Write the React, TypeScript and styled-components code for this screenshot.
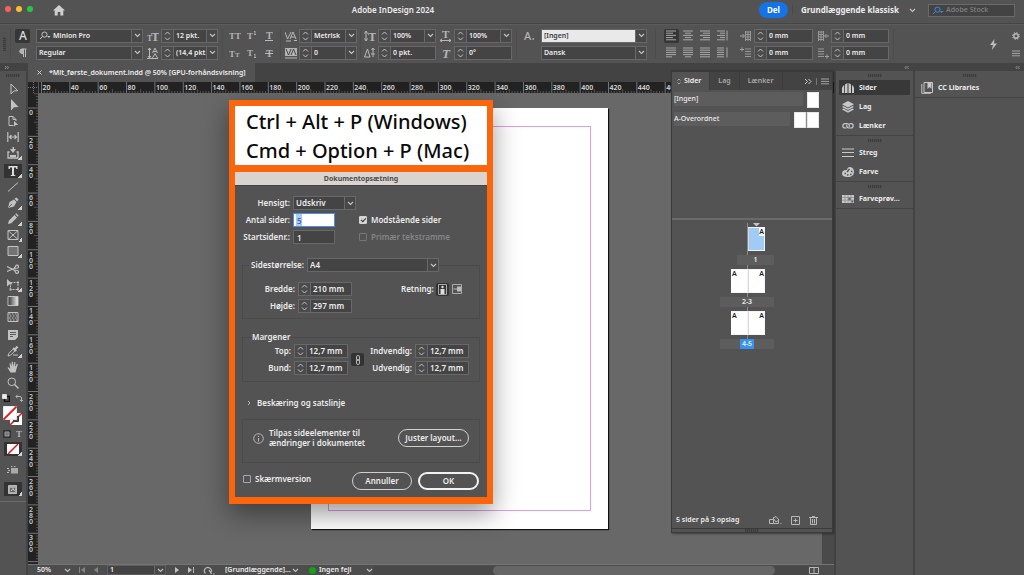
import React from "react";
import styled, { createGlobalStyle, css } from "styled-components";

const GlobalStyle = createGlobalStyle`
  *, *::before, *::after { box-sizing: border-box; }
  body {
    margin: 0;
    background: #434343;
    color: #ececec;
    font: 600 7px/10px "Noto Sans", "Open Sans", sans-serif;
  }
  button, input, select { font: inherit; color: inherit; margin: 0; border-radius: 0; }
  button { padding: 0; border: 0; background: none; display: flex; align-items: center; justify-content: center; }
  fieldset { margin: 0; min-width: 0; }
  svg { display: block; flex: none; }
`;

/* ---------- Shared icon drawing ---------- */

const Icon = ({ w = 12, h = 12, children }: { w?: number; h?: number; children: React.ReactNode }) => (
  <svg width={w} height={h} viewBox={`0 0 ${w} ${h}`} fill="none" stroke="#b8b8b8" strokeWidth="1" aria-hidden="true">
    {children}
  </svg>
);

const Chevron = () => (
  <svg width="7" height="5" viewBox="0 0 7 5" fill="none" stroke="#c4c4c4" strokeWidth="1.1" aria-hidden="true">
    <path d="M1 1l2.5 2.5L6 1" />
  </svg>
);

const MenuIcon = () => (
  <Icon w={8} h={7}>
    <path d="M0 1h8M0 3.4h8M0 5.8h8" stroke="#a4a4a4" />
  </Icon>
);

const glyph = { fill: "#b4b4b4", stroke: "none", fontFamily: "Liberation Serif, serif", fontWeight: 700 };
const sansGlyph = { stroke: "none", fontFamily: "Noto Sans, sans-serif", fontWeight: 500 };

/* ---------- Form controls ---------- */

const Field = styled.div<{ $light?: boolean; $grow?: boolean }>`
  display: flex;
  height: 14px;
  min-width: 0;
  flex: ${(p) => (p.$grow ? "1" : "none")};
  border: 1px solid #686868;
  background: ${(p) => (p.$light ? "#e9e9e9" : "#444444")};
  color: ${(p) => (p.$light ? "#3a3a3a" : "inherit")};
`;

const control = css`
  width: 100%;
  min-width: 0;
  height: 12px;
  padding: 0 0 0 2px;
  border: 0;
  outline: 0;
  background: transparent;
  line-height: 12px;
`;

const TextInput = styled.input`
  ${control}
`;

const NativeSelect = styled.select`
  ${control}
  appearance: none;
`;

const ArrowBox = styled.span`
  display: flex;
  align-items: center;
  justify-content: center;
  flex: none;
  width: 11px;
  border-left: 1px solid #686868;
  background: #484848;
  pointer-events: none;
`;

const StepperBox = styled.span`
  display: flex;
  flex-direction: column;
  flex: none;
  width: 12px;
  border-right: 1px solid #686868;
  background: #4b4b4b;
`;

const StepButton = styled.button`
  flex: 1;
`;

const Stepper = ({ label }: { label: string }) => (
  <StepperBox>
    <StepButton type="button" aria-label={`${label} op`}>
      <Icon w={7} h={4}><path d="M1 3.5L3.5 1 6 3.5" stroke="#c4c4c4" /></Icon>
    </StepButton>
    <StepButton type="button" aria-label={`${label} ned`}>
      <Icon w={7} h={4}><path d="M1 .5L3.5 3 6 .5" stroke="#c4c4c4" /></Icon>
    </StepButton>
  </StepperBox>
);

type PickerProps = { label: string; value: string; id?: string; step?: boolean; light?: boolean; lead?: React.ReactNode };

const LeadIcon = styled.span`
  display: flex;
  align-items: center;
  padding-left: 2px;
`;

const Picker = ({ label, value, id, step, light, lead }: PickerProps) => (
  <Field $grow $light={light}>
    {step && <Stepper label={label} />}
    {lead && <LeadIcon>{lead}</LeadIcon>}
    <NativeSelect id={id} aria-label={id ? undefined : label} defaultValue={value}>
      <option>{value}</option>
    </NativeSelect>
    <ArrowBox><Chevron /></ArrowBox>
  </Field>
);

const NumberField = ({ label, value, id }: { label: string; value: string; id?: string }) => (
  <Field $grow>
    <Stepper label={label} />
    <TextInput id={id} aria-label={id ? undefined : label} defaultValue={value} />
  </Field>
);

/* ---------- Title bar ---------- */

const Page = styled.div`
  display: flex;
  flex-direction: column;
  min-height: 100vh;
`;

const TitleBar = styled.header`
  display: flex;
  align-items: center;
  height: 24px;
  padding: 0 9px 3px 5px;
  background: #535353;
  border-bottom: 1px solid #454545;
  font-size: 8px;
`;

const Lights = styled.div`
  display: flex;
  gap: 5px;
  margin-right: 20px;
  padding-bottom: 3px;
`;

const Light = styled.span<{ $color: string }>`
  width: 6px;
  height: 6px;
  border-radius: 50%;
  background: ${(p) => p.$color};
`;

const AppTitle = styled.h1`
  flex: 1;
  margin: 0;
  padding-right: 38px;
  text-align: center;
  font-size: 8px;
  font-weight: 600;
`;

const ShareButton = styled.button`
  width: 29px;
  height: 16px;
  border-radius: 8px;
  background: #1473e6;
  color: #fff;
  font-weight: 700;
`;

const WorkspaceButton = styled.button`
  gap: 10px;
  margin: 0 7px 0 4px;
  padding: 0 5px 0 8px;
  border-left: 1px solid #4a4a4a;
  font-weight: 700;
`;

const SearchBox = styled.label`
  display: flex;
  align-items: center;
  width: 87px;
  height: 13px;
  padding-left: 3px;
  border: 1px solid #6a6a6a;
  background: #434343;
  font-size: 7px;
  input::placeholder { color: #7c7c7c; opacity: 1; }
`;

const Lens = ({ color }: { color: string }) => (
  <Icon w={12} h={9}>
    <circle cx="5.5" cy="3.6" r="2.6" stroke={color} />
    <path d="M3.6 5.4L1 8" stroke={color} />
    <path d="M8 5h3.6L9.8 7z" fill={color} stroke="none" />
  </Icon>
);

/* ---------- Control bar ---------- */

const ControlBar = styled.section`
  display: flex;
  align-items: center;
  gap: 4px;
  height: 39px;
  padding: 0 4px 0 3px;
  background: #535353;
  border-top: 1px solid #5c5c5c;
`;

const Grip = styled.span<{ $vertical?: boolean }>`
  width: ${(p) => (p.$vertical ? 3 : 14)}px;
  height: ${(p) => (p.$vertical ? 14 : 3)}px;
  background: repeating-linear-gradient(${(p) => (p.$vertical ? "0deg" : "90deg")}, #3b3b3b 0 1px, #4d4d4d 1px 2px);
`;

const Group = styled.div<{ $w: number }>`
  display: grid;
  grid-template-rows: 14px 14px;
  row-gap: 3px;
  flex: none;
  width: ${(p) => p.$w}px;
`;

const Line = styled.div`
  display: flex;
  align-items: center;
  gap: 2px;
`;

const Separator = styled.span<{ $gap?: number }>`
  width: 1px;
  height: 30px;
  margin: 0 ${(p) => p.$gap ?? 0}px;
  background: #4c4c4c;
`;

const Toggle = styled.button<{ $on?: boolean }>`
  width: 15px;
  height: 14px;
  border-radius: 2px;
  background: ${(p) => (p.$on ? "#363636" : "transparent")};
`;

const EdgeTools = styled.div`
  display: flex;
  align-items: center;
  gap: 15px;
  margin-left: auto;
`;

const Stack = styled.div`
  display: flex;
  flex-direction: column;
  gap: 10px;
`;

const TextIcon = ({ children }: { children: React.ReactNode }) => <Icon>{children}</Icon>;

const AlignIcon = ({ rows, side }: { rows: [number, number][]; side?: boolean }) => (
  <Icon w={11} h={11}>
    {rows.map(([a, b], i) => <path key={i} d={`M${a} ${1 + i * 2.2}H${b}`} stroke="#a9a9a9" />)}
    {side && <path d="M10 .5v10" stroke="#a9a9a9" />}
  </Icon>
);

const alignTop: { name: string; rows: [number, number][]; side?: boolean }[] = [
  { name: "Venstrestil", rows: [[0, 10], [0, 7], [0, 10], [0, 7], [0, 10]] },
  { name: "Centrer", rows: [[0, 10], [2, 8], [0, 10], [2, 8], [0, 10]] },
  { name: "Højrestil", rows: [[0, 10], [3, 10], [0, 10], [3, 10], [0, 10]] },
  { name: "Mod ryg", rows: [[0, 8], [3, 8], [0, 8], [3, 8], [0, 8]], side: true },
];
const alignBottom: typeof alignTop = [
  { name: "Juster venstre", rows: [[0, 10], [0, 10], [0, 10], [0, 10], [0, 6]] },
  { name: "Juster centreret", rows: [[0, 10], [0, 10], [0, 10], [0, 10], [2, 8]] },
  { name: "Juster alt", rows: [[0, 10], [0, 10], [0, 10], [0, 10], [0, 10]] },
  { name: "Fra ryg", rows: [[0, 7], [0, 7], [0, 7], [0, 7], [0, 7]], side: true },
];

const IndentIcon = ({ flip, low }: { flip?: boolean; low?: boolean }) => (
  <Icon w={12} h={12}>
    <g transform={flip ? "translate(12 0) scale(-1 1)" : undefined}>
      <path d={low ? "M5 2h6M5 4.5h6M5 7h6M5 9.5h6" : "M5.5 1v10M8 1v10M10.5 1v10M6 2h5M6 4.5h4M6 7h5M6 9.5h4"} stroke="#989898" />
      <path d={low && flip ? "M0 9.5h4M2 7.5v4" : low ? "M0 2.5h4M2 .5v4" : "M0 6h4M2.5 4L4.5 6l-2 2"} stroke="#a0a0a0" />
    </g>
  </Icon>
);

const IconCell = styled.span`
  display: flex;
  flex: none;
  width: 12px;
`;

/* ---------- Work area ---------- */

const Main = styled.main`
  position: relative;
  display: flex;
  flex: 1;
`;

const ToolColumn = styled.nav`
  display: flex;
  flex-direction: column;
  width: 27px;
  background: #535353;
  border-right: 1px solid #434343;
`;

const CollapseStrip = styled.div<{ $end?: boolean }>`
  display: flex;
  align-items: center;
  justify-content: ${(p) => (p.$end ? "flex-end" : "flex-start")};
  height: 8px;
  padding: 0 4px;
  background: #434343;
`;

const Collapse = ({ back }: { back?: boolean }) => (
  <Icon w={5} h={5}>
    <path d={back ? "M2.3 1L1 2.5l1.3 1.5M4.5 1L3.2 2.5l1.3 1.5" : "M1 1l1.3 1.5L1 4M3.2 1l1.3 1.5L3.2 4"} stroke="#a5a5a5" strokeWidth=".8" />
  </Icon>
);

const GripRow = styled.div`
  display: flex;
  justify-content: center;
  padding: 3px 0;
`;

const ToolSet = styled.div`
  display: flex;
  flex-direction: column;
  align-items: center;
  gap: 4px;
  padding: 2px 1px 3px 0;
`;

const ToolGroup = styled.div<{ $gap?: number }>`
  display: flex;
  flex-direction: column;
  gap: ${(p) => p.$gap ?? 2}px;
`;

const Tool = styled.button<{ $on?: boolean; $more?: boolean }>`
  position: relative;
  width: 18px;
  height: 14px;
  background: ${(p) => (p.$on ? "#333333" : "transparent")};
  &::after {
    content: "";
    display: ${(p) => (p.$more ? "block" : "none")};
    position: absolute;
    right: 0;
    bottom: 0;
    width: 4px;
    height: 4px;
    background: linear-gradient(135deg, transparent 50%, #cfcfcf 50%);
  }
`;

const Swatches = styled.div`
  display: flex;
  flex-direction: column;
  align-items: center;
  gap: 4px;
  padding: 1px 1px 5px 0;
  border-bottom: 1px solid #6b6b6b;
`;

const SwatchLine = styled.div`
  display: flex;
  gap: 5px;
`;

const DocumentArea = styled.div`
  display: flex;
  flex-direction: column;
  flex: 1;
  min-width: 0;
  margin-left: 1px;
`;

const TabStrip = styled.div`
  display: flex;
  height: 19px;
`;

const DocTab = styled.div`
  display: flex;
  align-items: center;
  gap: 7px;
  padding: 0 9px;
  background: #535353;
`;

const RulerRow = styled.div`
  display: flex;
  height: 11px;
  overflow: hidden;
  background: #222222;
`;

const CanvasRow = styled.div`
  display: flex;
  flex: 1;
  min-height: 470px;
`;

const SideRuler = styled.div`
  flex: none;
  width: 10px;
  overflow: hidden;
  background: #222222;
  contain: size;
`;

const Canvas = styled.div`
  position: relative;
  flex: 1;
  overflow: hidden;
  background: #686868;
`;

const Sheet = styled.div`
  position: absolute;
  left: 273px;
  top: 15px;
  width: 297px;
  height: 421px;
  padding: 18px 17px;
  background: #fff;
  box-shadow: 1px 1px 1px #111;
`;

const Margins = styled.div`
  height: 100%;
  border: 1px solid #e39bea;
`;

const ScrollTrack = styled.div`
  width: 12px;
  background: #4a4a4a;
`;

const StatusBar = styled.footer`
  display: flex;
  align-items: center;
  height: 11px;
  padding: 0 2px 0 7px;
  background: #4d4d4d;
  border-top: 1px solid #747474;
`;

const StatusSelect = styled.label<{ $w: number }>`
  display: flex;
  align-items: center;
  width: ${(p) => p.$w}px;
  select { height: 10px; line-height: 10px; }
`;

const Pager = styled.div`
  display: flex;
  align-items: center;
  gap: 9px;
  margin: 0 9px 0 8px;
`;

const PageField = styled.label`
  display: flex;
  width: 59px;
  height: 10px;
  background: #434343;
  border: 1px solid #5e5e5e;
  select { height: 8px; line-height: 8px; }
`;

const StatusDot = styled.span`
  width: 7px;
  height: 7px;
  margin: 0 1px 0 10px;
  border-radius: 50%;
  background: #16a016;
`;

const HScroll = styled.div`
  display: flex;
  flex: 1;
  height: 9px;
  padding-left: 120px;
  background: #484848;
`;

const HThumb = styled.span`
  flex: 0 1 282px;
  border-radius: 5px;
  background: #666666;
`;

const MM20 = 28.35;
const tick = (i: number) => (i % 10 === 0 ? 11 : i % 5 === 0 ? 4 : 2);

const TopRuler = () => (
  <svg width="794" height="11" aria-hidden="true">
    <path d="M0 5.5h10M5.5 0v11" stroke="#777" strokeDasharray="1 1" />
    <path d="M10.5 0v11" stroke="#555" />
    {Array.from({ length: 280 }, (_, i) => (
      <path key={i} d={`M${(13.5 + (i * MM20) / 10).toFixed(2)} 11v-${tick(i)}`} stroke="#757575" strokeWidth={i % 10 ? 0.6 : 1} />
    ))}
    {Array.from({ length: 27 }, (_, i) => (
      <text key={i} x={14.5 + i * MM20} y="8" fill="#d8d8d8" fontSize="7" fontWeight="600">{20 + i * 20}</text>
    ))}
  </svg>
);

/* Labels read downwards, one digit under the other. */
const LeftRuler = () => (
  <svg width="10" height="471" aria-hidden="true">
    {Array.from({ length: 166 }, (_, i) => {
      const k = i - 5;
      return <path key={i} d={`M10 ${(15 + (k * MM20) / 10).toFixed(2)}h-${k % 10 === 0 ? 10 : k % 5 === 0 ? 4 : 2}`} stroke="#757575" strokeWidth={k % 10 ? 0.6 : 1} />;
    })}
    {Array.from({ length: 16 }, (_, i) => {
      const label = String(i * 20);
      return (
        <text
          key={i}
          x={label.split("").map(() => 1).join(" ")}
          y={label.split("").map((_, n) => 22 + i * MM20 + n * 6).join(" ")}
          fill="#c8c8c8"
          fontSize="7"
        >
          {label}
        </text>
      );
    })}
  </svg>
);

/* ---------- Document setup dialog ---------- */

const Callout = styled.section`
  position: absolute;
  left: 229px;
  top: 37px;
  width: 264px;
  border: 6px solid #fb650b;
  border-bottom-width: 7px;
  background: #fb650b;
  box-shadow: 0 10px 24px rgba(0, 0, 0, 0.4);
  font-size: 8px;
`;

const Shortcut = styled.p`
  height: 59px;
  margin: 0 0 7px;
  padding: 1px 0 0 11px;
  background: #fff;
  color: #0a0a0a;
  font: 500 20px/29px "Noto Sans", sans-serif;
  white-space: nowrap;
`;

const DialogTitle = styled.h2`
  height: 14px;
  margin: 0;
  background: #dad4d0;
  color: #4c4c4c;
  font-size: 7px;
  line-height: 13px;
  text-align: center;
  border-bottom: 1px solid #444;
`;

const DialogBody = styled.form`
  display: flex;
  flex-direction: column;
  padding: 10px 7px 7px;
  background: #535353;
`;

const Split = styled.div`
  display: grid;
  grid-template-columns: 117px 1fr;
`;

const Rows = styled.div<{ $top?: number }>`
  display: flex;
  flex-direction: column;
  gap: 3px;
  padding-top: ${(p) => p.$top ?? 0}px;
`;

const FormRow = styled.div`
  display: flex;
  align-items: center;
  height: 14px;
`;

const FormLabel = styled.label<{ $w: number }>`
  flex: none;
  width: ${(p) => p.$w}px;
  padding-right: 3px;
  text-align: right;
  white-space: nowrap;
`;

const Sized = styled.div<{ $w: number }>`
  display: flex;
  flex: none;
  width: ${(p) => p.$w}px;
`;

const PlainField = styled.input<{ $active?: boolean }>`
  width: 42px;
  height: 14px;
  padding: 0 3px;
  outline: 0;
  border: 1px solid ${(p) => (p.$active ? "#4a90e2" : "#686868")};
  background: ${(p) => (p.$active ? "linear-gradient(90deg, #fff 2px, #a9cdf5 2px 8px, #fff 8px)" : "#444444")};
  color: ${(p) => (p.$active ? "#3f6ea5" : "inherit")};
`;

const CheckLabel = styled.label<{ $off?: boolean }>`
  display: flex;
  align-items: center;
  gap: 4px;
  height: 14px;
  white-space: nowrap;
  color: ${(p) => (p.$off ? "#858585" : "inherit")};
`;

const CheckBox = styled.input`
  appearance: none;
  width: 8px;
  height: 8px;
  border: 1px solid #a8a8a8;
  border-radius: 1px;
  &:disabled { border-color: #757575; }
  &:checked {
    background: #d4d4d4;
    border-color: #d4d4d4;
  }
  &:checked::after {
    content: "";
    display: block;
    width: 5px;
    height: 3px;
    margin: 1px 0 0 1px;
    border: solid #333;
    border-width: 0 0 1px 1px;
    transform: rotate(-45deg);
  }
`;

const Frame = styled.fieldset<{ $mt: number }>`
  margin-top: ${(p) => p.$mt}px;
  padding: 0;
  border: 1px solid #4b4b4b;
`;

const SizeLegend = styled.legend`
  display: flex;
  align-items: center;
  margin-left: 6px;
  padding: 0;
`;

const TextLegend = styled.legend`
  margin-left: 9px;
  padding: 0;
`;

const SizeGrid = styled.div`
  display: grid;
  grid-template-columns: 158px 1fr;
  padding: 10px 0 5px;
`;

const MarginGrid = styled.div`
  display: grid;
  grid-template-columns: 106px 15px 1fr;
  padding: 2px 0 6px;
`;

const OrientationRow = styled.div`
  display: flex;
  align-items: center;
  gap: 2px;
  height: 14px;
`;

const SmallButton = styled.button<{ $on?: boolean }>`
  width: 13px;
  height: 13px;
  border-radius: 2px;
  background: ${(p) => (p.$on ? "#333333" : "transparent")};
`;

const LinkCell = styled.div`
  display: flex;
  align-items: center;
  padding-left: 2px;
`;

const Disclosure = styled.button`
  justify-content: flex-start;
  gap: 5px;
  height: 12px;
  margin-top: 15px;
  padding-left: 5px;
`;

const AdjustBox = styled.div`
  display: flex;
  align-items: center;
  gap: 5px;
  height: 44px;
  margin-top: 10px;
  padding: 0 10px 6px 10px;
  border: 1px solid #4b4b4b;
`;

const AdjustText = styled.p`
  flex: 1;
  margin: 0;
  white-space: nowrap;
`;

const PillButton = styled.button<{ $w: number; $primary?: boolean }>`
  flex: none;
  width: ${(p) => p.$w}px;
  height: 18px;
  border: ${(p) => (p.$primary ? "2px solid #f2f2f2" : "1px solid #cfcfcf")};
  border-radius: 9px;
`;

const DialogFooter = styled.div`
  display: flex;
  gap: 6px;
  margin: 9px 1px 0;
  label { flex: 1; }
`;

/* ---------- Pages panel ---------- */

const PagesPanel = styled.aside`
  position: absolute;
  right: 191px;
  top: 7px;
  width: 162px;
  display: flex;
  flex-direction: column;
  background: #535353;
  border: solid #3a3a3a;
  border-width: 2px 1px 1px;
  box-shadow: 1px 1px 2px rgba(0, 0, 0, 0.4);
`;

const PanelTabs = styled.div`
  display: flex;
  align-items: stretch;
  height: 18px;
  background: #434343;
`;

const PanelTab = styled.button<{ $on?: boolean }>`
  gap: 3px;
  padding: 0 8px 0 ${(p) => (p.$on ? 5 : 8)}px;
  border-right: 1px solid #3c3c3c;
  background: ${(p) => (p.$on ? "#535353" : "transparent")};
  color: ${(p) => (p.$on ? "#f2f2f2" : "#a8a8a8")};
`;

const PanelTools = styled.div`
  display: flex;
  align-items: center;
  gap: 4px;
  margin-left: auto;
  padding-right: 3px;
`;

const Masters = styled.div`
  display: flex;
  flex-direction: column;
  gap: 4px;
  height: 130px;
  padding: 2px 13px 0 2px;
  border-bottom: 2px solid #6a6a6a;
  font-weight: 500;
`;

const MasterRow = styled.div`
  display: flex;
  gap: 4px;
  height: 16px;
`;

const MasterName = styled.span`
  flex: 1;
  height: 14px;
  line-height: 13px;
  background: #5d5d5d;
`;

const Thumbs = styled.span`
  display: flex;
  gap: 1px;
  background: #8a8a8a;
`;

const Thumb = styled.span`
  width: 12px;
  background: #fff;
  border: 1px solid #e8e8e8;
`;

const Spreads = styled.div`
  display: flex;
  flex-direction: column;
  height: 292px;
  padding: 3px 58px 0 47px;
`;

const Spread = styled.figure`
  position: relative;
  display: flex;
  flex-direction: column;
  align-items: flex-end;
  gap: 3px;
  margin: 0;
  padding-top: 3px;
  background: linear-gradient(#8a8a8a, #8a8a8a) right 26px top / 1px 100% no-repeat;
`;

const SectionMarker = styled.span`
  position: absolute;
  top: 0;
  right: 14px;
`;

const SpreadPages = styled.div`
  display: flex;
  height: 26px;
  padding: 1px 9px 1px 0;
`;

const SpreadPage = styled.span<{ $side: "left" | "right"; $current?: boolean }>`
  display: flex;
  align-items: flex-start;
  justify-content: ${(p) => (p.$side === "left" ? "flex-start" : "flex-end")};
  width: 17px;
  border: 1px solid #f4f4f4;
  border-left-color: ${(p) => (p.$side === "left" ? "#fff" : "#d8d8d8")};
  background: ${(p) => (p.$current ? "#a0cbf5" : "#ffffff")};
  color: #222;
  line-height: 8px;
  span { background: #fff; }
`;

const Caption = styled.figcaption<{ $w: number; $on?: boolean }>`
  width: ${(p) => p.$w}px;
  height: 10px;
  background: #5d5d5d;
  text-align: center;
  span {
    display: inline-block;
    padding: 0 2px;
    background: ${(p) => (p.$on ? "#3294f0" : "transparent")};
  }
`;

const PanelFooter = styled.div`
  display: flex;
  align-items: center;
  gap: 9px;
  height: 16px;
  padding: 0 14px 0 4px;
  > span { flex: 1; }
`;

const ResizeBar = styled.div`
  display: flex;
  justify-content: center;
  border-top: 1px solid #3a3a3a;
`;

/* ---------- Dock ---------- */

const Dock = styled.aside<{ $w: number }>`
  display: flex;
  flex-direction: column;
  flex: none;
  width: ${(p) => p.$w}px;
  border-left: 2px solid #434343;
  background: #535353;
  font-weight: 700;
`;

const DockGroup = styled.div`
  display: flex;
  flex-direction: column;
  gap: 4px;
  padding: 0 3px 2px;
  border-bottom: 1px solid #434343;
`;

const DockItem = styled.button<{ $on?: boolean }>`
  justify-content: flex-start;
  gap: 5px;
  height: 15px;
  padding-left: 3px;
  background: ${(p) => (p.$on ? "#383838" : "transparent")};
  white-space: nowrap;
`;

const f = "#c8c8c8";
const dockIcons: Record<string, React.ReactNode> = {
  Sider: <path d="M0 11V6l1-2 1.2-1V11zM3 11V2.5L5.5 1V11zM6.5 11V1L9 2.5V11zM10 11V3l1.2 1 .8 2v5z" fill={f} stroke="none" />,
  Lag: <path d="M6 0l6 3.2-6 3.3L0 3.2zM1.6 5L0 5.9l6 3.2 6-3.2L10.4 5 6 7.4zM1.6 7.6L0 8.5 6 11.8l6-3.3-1.6-.9L6 10z" fill={f} stroke="none" />,
  Lænker: <path d="M4.5 8H3a2.2 2.2 0 010-4.4h2.200A2.2 2.2 0 017 7M7.5 3.6H9A2.2 2.2 0 019 8H6.8A2.2 2.2 0 015 4.7" stroke={f} strokeWidth="1.2" />,
  Streg: <path d="M0 2h12M0 5.5h12M0 9.5h12" stroke={f} strokeWidth="1.2" />,
  Farve: (
    <>
      <path d="M0 7.5C0 5 2 3.5 5 4c0-2 1.5-3.5 3.5-3C11 1.5 12 3.5 12 6c0 3-2.5 5-6 5-3.5 0-6-1-6-3.5z" fill={f} stroke="none" />
      <path d="M2.5 7.5h1.5M5 9h1.5M8 8.5h1.5M9 5.5h1.5M5 6l2.5-3" stroke="#535353" strokeWidth="1.4" />
    </>
  ),
  "Farveprøv…": (
    <>
      <path d="M0 2h12v8H0z" fill={f} stroke="none" />
      <path d="M0 4.5h12M0 7.2h12M3 2v8M6 2v8M9 2v8" stroke="#8b8b8b" strokeWidth=".7" />
      <path d="M6.300 4.800h2.400v2.400h-2.400zM9.400 7.500h2v2h-2z" fill="#666" stroke="none" />
    </>
  ),
  "CC Libraries": (
    <>
      <path d="M3 .5h8.500v10H3zM.8 2v9.300h9" stroke={f} />
      <path d="M6.500 1v6L8.500 5l2 2V1z" fill={f} stroke="none" />
    </>
  ),
};

const dockGroups = [["Sider", "Lag", "Lænker"], ["Streg", "Farve"], ["Farveprøv…"]];

/* ---------- Tool glyphs ---------- */

type ToolDef = { name: string; art: React.ReactNode; more?: boolean; on?: boolean };
const g = "#c2c2c2";
const toolGroups: ToolDef[][] = [
  [
    { name: "Markering", art: <path d="M4 1v10l2.800-3 4-.3z" stroke={g} /> },
    { name: "Direkte markering", art: <path d="M4 0v11.500l3-3.200 4.500-.3z" fill={g} stroke="none" /> },
    { name: "Side", art: <><path d="M6.500 10.500H2V1.500h4L9 4.500V6M6 1.500v3h3" stroke={g} /><path d="M7 6v5.500l1.700-1.500 2.600-.2z" fill={g} stroke="none" /></> },
    { name: "Mellemrum", art: <path d="M.8 1v10M11.200 1v10M2.500 6h7M4.500 4l-2 2 2 2M7.500 4l2 2-2 2" stroke={g} strokeWidth="1.200" /> },
    { name: "Indholdsindsamler", more: true, art: <><path d="M2.500 5H1v6h10V5H9.500" stroke={g} strokeWidth="1.300" /><path d="M3 8h6v2H3zM3 2l3 4 3-4H7V0H5.500v2z" fill={g} stroke="none" /></> },
  ],
  [
    { name: "Tekst", more: true, on: true, art: <path d="M1.500 1h9v3H9.300l-.5-1.500H7v7.300l1.300.4v.8H3.700v-.8l1.300-.4V2.500H3.200L2.700 4H1.500z" fill="#dcdcdc" stroke="none" /> },
    { name: "Streg", art: <path d="M1 10.500L11 1.500" stroke={g} /> },
    { name: "Pen", more: true, art: <><path d="M1 11l1.500-6L7 2.500 9.500 5 7 9.500z" fill={g} stroke="none" /><path d="M7.500 1.800l2-1.300 2 2-1.300 2z" fill={g} stroke="none" /><path d="M1.500 10.500L5 7" stroke="#535353" strokeWidth=".8" /></> },
    { name: "Blyant", more: true, art: <path d="M1 11l.8-3.300L7.500 2 10 4.500 4.300 10.200zM8.200 1.300l1-1 2.500 2.500-1 1z" fill={g} stroke="none" /> },
    { name: "Rektangelramme", more: true, art: <path d="M1 1.500h10v9H1zM1 1.500l10 9M11 1.500l-10 9" stroke={g} /> },
    { name: "Rektangel", more: true, art: <path d="M1 1.500h10v9H1z" stroke={g} fill="#737373" /> },
  ],
  [
    { name: "Saks", art: <path d="M0 3.500l7 3.500M0 8.500L7 5.500M7 5.500l1.500-2a1.500 1.500 0 112 1.500zM7 7l1.500 2a1.500 1.500 0 102-1.500z" stroke={g} strokeWidth="1.200" /> },
    { name: "Fri transformering", more: true, art: <><path d="M3.500 3.500h7.500v7h-7.500z" stroke={g} strokeDasharray="2 1" /><path d="M0 0v7.500L2.200 5.500 5.500 5.300z" fill={g} stroke="none" /><path d="M10 2.500h2v2h-2zM10 9.500h2v2h-2zM2.500 9.500h2v2h-2z" fill={g} stroke="none" /></> },
    { name: "Farveforløb", art: <><defs><linearGradient id="grad"><stop stopColor="#333" /><stop offset="1" stopColor="#eee" /></linearGradient></defs><path d="M1 1.500h10v9H1z" fill="url(#grad)" stroke={g} /></> },
    { name: "Udtoning", art: <><path d="M1 1.500h10v9H1z" stroke={g} /><path d="M2 3h8M3 5h8M2 7h8M3 9h8" stroke="#a0a0a0" strokeWidth="1.500" strokeDasharray="1.500 1.500" /></> },
  ],
  [
    { name: "Note", art: <><path d="M1 1h10v7l-3 3H1z" fill={g} stroke="none" /><path d="M3 3.500h6M3 5.500h6M3 7.500h3" stroke="#5a5a5a" /></> },
    { name: "Pipette", more: true, art: <><path d="M1 11l.7-2.500L6 4.200l1.800 1.800L3.500 10.300z" stroke={g} /><path d="M5.500 3.500l1-1L8 3l1.500-2.300L11.500 2.500 9.300 4.300l.4 1.400-1 1z" fill={g} stroke="none" /><path d="M6 10h5" stroke={g} /></> },
    { name: "Hånd", art: <path d="M3.500 11.500L.5 6.800l1-.6 1.700 1.500L2.500 2.500l1-.3 1 3.500L4.700.8h1.200l.3 4.700L7.400 1l1.100.2-.6 4.800 2-3.300 1 .5L9.300 8.500 8.500 11.500z" fill={g} stroke="none" /> },
    { name: "Zoom", art: <><circle cx="4.800" cy="4.800" r="3.800" stroke={g} /><path d="M7.600 7.600L11.500 11.500" stroke={g} strokeWidth="1.400" /></> },
  ],
];

export default function App() {
  return (
    <Page>
      <GlobalStyle />
      <TitleBar>
        <Lights>
          <Light $color="#fe5f57" /><Light $color="#febc2e" /><Light $color="#28c840" />
        </Lights>
        <button aria-label="Hjem">
          <Icon w={12} h={12}><path d="M6 1L0 6.500h1.700V11.500h3V8h2.600v3.500h3V6.500H12z" fill="#cfcfcf" stroke="none" /></Icon>
        </button>
        <AppTitle>Adobe InDesign 2024</AppTitle>
        <ShareButton>Del</ShareButton>
        <WorkspaceButton>Grundlæggende klassisk <Chevron /></WorkspaceButton>
        <SearchBox>
          <Lens color="#3b8be0" />
          <TextInput aria-label="Adobe Stock" placeholder="Adobe Stock" />
        </SearchBox>
      </TitleBar>

      <ControlBar>
        <Grip $vertical />
        <Separator />
        <Group $w={17}>
          <Toggle $on aria-label="Tegnformatering">
            <TextIcon><text {...sansGlyph} x="2" y="10" fontSize="12" fill="#dcdcdc">A</text></TextIcon>
          </Toggle>
          <Toggle aria-label="Afsnitsformatering">
            <TextIcon><path d="M6.500 2v8M8.500 2v8M9.500 2H5.500" /><path d="M6.500 2H5a2 2 0 000 4.500h1.500z" fill="#b4b4b4" /></TextIcon>
          </Toggle>
        </Group>
        <Group $w={107}>
          <Picker label="Skrifttype" value="Minion Pro" lead={<Lens color="#c4c4c4" />} />
          <Picker label="Typografi" value="Regular" />
        </Group>
        <Group $w={71}>
          <Line>
            <IconCell><TextIcon><text {...glyph} x="0" y="11" fontSize="8">T</text><text {...glyph} x="4" y="11" fontSize="13">T</text></TextIcon></IconCell>
            <Picker label="Skriftstørrelse" value="12 pkt." step />
          </Line>
          <Line>
            <IconCell><TextIcon><path d="M2.500 1v10M1 3l1.500-2L4 3M1 9l1.500 2L4 9M0 11.500h11M5.500 6L8 1l2.500 5M6 4.500h4M5.500 11L8 6.500l2.500 4.500" /></TextIcon></IconCell>
            <Picker label="Skydning" value="(14,4 pkt." step />
          </Line>
        </Group>
        <Separator />
        <Group $w={49}>
          <Line>
            <Toggle aria-label="Store bogstaver"><TextIcon><text {...glyph} x="0" y="9" fontSize="9">TT</text></TextIcon></Toggle>
            <Toggle aria-label="Hævet skrift"><TextIcon><text {...glyph} x="1" y="9" fontSize="9">T</text><path d="M9 1v3.500M8 2l1-1M8 4.500h2" strokeWidth=".8" /></TextIcon></Toggle>
            <Toggle aria-label="Understreget"><TextIcon><text {...glyph} x="3" y="9" fontSize="10">T</text><path d="M2 10.500h8" /></TextIcon></Toggle>
          </Line>
          <Line>
            <Toggle aria-label="Kapitæler"><TextIcon><text {...glyph} x="0" y="10" fontSize="9">T</text><text {...glyph} x="6" y="10" fontSize="7">T</text></TextIcon></Toggle>
            <Toggle aria-label="Sænket skrift"><TextIcon><text {...glyph} x="1" y="9" fontSize="9">T</text><path d="M9 7v3.500M8 8l1-1M8 10.500h2" strokeWidth=".8" /></TextIcon></Toggle>
            <Toggle aria-label="Gennemstreget"><TextIcon><text {...glyph} x="3" y="10" fontSize="10">T</text><path d="M2 6.500h8" /></TextIcon></Toggle>
          </Line>
        </Group>
        <Separator />
        <Group $w={72}>
          <Line>
            <IconCell><TextIcon><path d="M0 2l2.500 7L6 2M5 9l3-7 3 7M6 7h4M1 11h5M9 10.500h3" /></TextIcon></IconCell>
            <Picker label="Kerning" value="Metrisk" step />
          </Line>
          <Line>
            <IconCell><TextIcon><path d="M0 1h12v8H0z" fill="#b4b4b4" stroke="none" /><path d="M1 2l2.500 6L6 2M6 8l2.500-6L11 8" stroke="#484848" /><path d="M0 11h12" /></TextIcon></IconCell>
            <Picker label="Knibning" value="0" step />
          </Line>
        </Group>
        <Separator $gap={-1} />
        <Group $w={72}>
          <Line>
            <IconCell><TextIcon><path d="M2 1.500v9M.5 3.500L2 1l1.500 2.500M.5 8.500L2 11l1.500-2.500" /><text {...glyph} x="4" y="11" fontSize="13">T</text></TextIcon></IconCell>
            <Picker label="Lodret skala" value="100%" step />
          </Line>
          <Line>
            <IconCell><TextIcon><path d="M.5 10L3.500 2l2.500 8zM9 1v9M7.500 3L9 1l1.500 2M7 7h4" /></TextIcon></IconCell>
            <NumberField label="Grundlinjeforskydning" value="0 pkt." />
          </Line>
        </Group>
        <Group $w={72}>
          <Line>
            <IconCell><TextIcon><text {...glyph} x="2" y="8" fontSize="11">T</text><path d="M0 10.500h11M2 9L0 10.500 2 12M9 9l2 1.500L9 12" /></TextIcon></IconCell>
            <Picker label="Vandret skala" value="100%" step />
          </Line>
          <Line>
            <IconCell><TextIcon><text {...glyph} x="2" y="11" fontSize="13" fontStyle="italic">T</text></TextIcon></IconCell>
            <NumberField label="Hældning" value="0°" />
          </Line>
        </Group>
        <Separator />
        <Group $w={126}>
          <Line>
            <Toggle aria-label="Tegntypografi"><TextIcon><text {...sansGlyph} x="1" y="10" fontSize="11" fill="#b4b4b4">A</text><path d="M9.500 9h1.500" strokeWidth="1.500" /></TextIcon></Toggle>
            <Sized $w={1} />
            <Picker label="Tegntypografi" value="[Ingen]" light />
          </Line>
          <Line>
            <Sized $w={18} />
            <Picker label="Sprog" value="Dansk" />
          </Line>
        </Group>
        <Separator $gap={4} />
        <Group $w={72}>
          {[alignTop, alignBottom].map((set, r) => (
            <Line key={r}>
              {set.map((a, i) => (
                <Toggle key={a.name} $on={r === 0 && i === 0} aria-label={a.name}>
                  <AlignIcon rows={a.rows} side={a.side} />
                </Toggle>
              ))}
            </Line>
          ))}
        </Group>
        <Group $w={73}>
          <Line><IconCell><IndentIcon /></IconCell><NumberField label="Venstre indrykning" value="0 mm" /></Line>
          <Line><IconCell><IndentIcon low /></IconCell><NumberField label="Førstelinjeindrykning" value="0 mm" /></Line>
        </Group>
        <Group $w={72}>
          <Line><IconCell><IndentIcon flip /></IconCell><NumberField label="Højre indrykning" value="0 mm" /></Line>
          <Line><IconCell><IndentIcon flip low /></IconCell><NumberField label="Sidstelinjeindrykning" value="0 mm" /></Line>
        </Group>
        <Separator />
        <EdgeTools>
          <button aria-label="Hurtig anvendelse">
            <Icon w={7} h={11}><path d="M4.500 0L0 6h3L1.800 11 7 4.500H4z" fill="#bdbdbd" stroke="none" /></Icon>
          </button>
          <Stack>
            <button aria-label="Indstillinger">
              <Icon w={8} h={8}><circle cx="4" cy="4" r="2.200" strokeWidth="1.500" /><circle cx="4" cy="4" r="3.400" strokeDasharray="1.300 1.370" /></Icon>
            </button>
            <button aria-label="Panelmenu"><MenuIcon /></button>
          </Stack>
        </EdgeTools>
      </ControlBar>

      <Main>
        <ToolColumn aria-label="Værktøjer">
          <CollapseStrip><Collapse /></CollapseStrip>
          <GripRow><Grip /></GripRow>
          <ToolSet>
            {toolGroups.map((group, i) => (
              <ToolGroup key={i}>
                {group.map((t) => (
                  <Tool key={t.name} $on={t.on} $more={t.more} aria-label={t.name}>
                    <Icon>{t.art}</Icon>
                  </Tool>
                ))}
              </ToolGroup>
            ))}
          </ToolSet>
          <Swatches>
            <SwatchLine>
              <Icon w={8} h={8}><path d="M2.500 2.500h5v5h-5z" stroke="#111" strokeWidth="1.500" /><path d="M.5.500h4v4h-4z" fill="#eee" stroke="#ddd" /></Icon>
              <Icon w={8} h={8}><path d="M1 2.500h4a1.500 1.500 0 011.500 1.500v3M2.500.8L.8 2.500l1.700 1.700M5 5.800l1.500 1.700L8 5.800" /></Icon>
            </SwatchLine>
            <Icon w={20} h={20}>
              <path d="M7 7h12v12H7z" fill="#fff" stroke="none" />
              <path d="M7 19L19 7" stroke="#e8141c" strokeWidth="1.600" />
              <path d="M10.500 10.500h5v5h-5z" fill="#535353" stroke="#333" />
              <path d="M.5.500h13v13H.5z" fill="#fff" stroke="#e8e8e8" />
              <path d="M.5 13.500L13.500.500" stroke="#e8141c" strokeWidth="1.800" />
            </Icon>
            <SwatchLine>
              <Icon w={8} h={8}><path d="M0 0h8v8H0z" fill="#333" stroke="none" /><path d="M2 2h4v4H2z" fill="#777" stroke="#999" /></Icon>
              <Icon w={7} h={8}><text {...glyph} x="0" y="7" fontSize="9">T</text></Icon>
            </SwatchLine>
            <ToolGroup $gap={6}>
              <Tool $on $more aria-label="Anvend ingen">
                <Icon w={12} h={10}><path d="M0 0h12v10H0z" fill="#fff" stroke="none" /><path d="M1 10L11 0" stroke="#e8141c" strokeWidth="1.500" /></Icon>
              </Tool>
              <Tool aria-label="Visning">
                <Icon w={12} h={9}><path d="M4 3h7v5.500H4z" fill="#aaa" stroke="none" /><path d="M0 3.500h2M4 1.500h1.500M7 1.500h1.500M1 5.500h2M0 7.500h2" /></Icon>
              </Tool>
              <Tool $on $more aria-label="Skærmtilstand">
                <Icon w={9} h={9}><path d="M.5.500h8v8h-8z" fill="#aaa" /><path d="M2 3h5v4H2z" fill="#666" stroke="none" /><path d="M3 6l2-2.500L6.500 6" stroke="#ccc" /></Icon>
              </Tool>
            </ToolGroup>
          </Swatches>
        </ToolColumn>

        <DocumentArea>
          <TabStrip>
            <DocTab>
              <button aria-label="Luk dokument"><Icon w={5} h={5}><path d="M.5.500l4 4M4.500.500l-4 4" stroke="#ccc" /></Icon></button>
              *Mit_første_dokument.indd @ 50% [GPU-forhåndsvisning]
            </DocTab>
          </TabStrip>
          <RulerRow><TopRuler /></RulerRow>
          <CanvasRow>
            <SideRuler><LeftRuler /></SideRuler>
            <Canvas>
              <Sheet><Margins /></Sheet>
            </Canvas>
            <ScrollTrack />
          </CanvasRow>
          <StatusBar>
            <StatusSelect $w={36}>
              <NativeSelect aria-label="Zoom" defaultValue="50%"><option>50%</option></NativeSelect>
              <Chevron />
            </StatusSelect>
            <Pager>
              <button aria-label="Første side"><Icon w={6} h={6}><path d="M.5 0v6" stroke="#858585" /><path d="M6 0v6L2 3z" fill="#858585" stroke="none" /></Icon></button>
              <button aria-label="Forrige side"><Icon w={4} h={6}><path d="M4 0v6L0 3z" fill="#858585" stroke="none" /></Icon></button>
              <PageField>
                <NativeSelect aria-label="Side" defaultValue="1"><option>1</option></NativeSelect>
                <ArrowBox><Chevron /></ArrowBox>
              </PageField>
              <button aria-label="Næste side"><Icon w={4} h={6}><path d="M0 0v6l4-3z" fill="#c4c4c4" stroke="none" /></Icon></button>
              <button aria-label="Sidste side"><Icon w={6} h={6}><path d="M5.500 0v6" /><path d="M0 0v6l4-3z" fill="#c4c4c4" stroke="none" /></Icon></button>
            </Pager>
            <Icon w={20} h={9}><path d="M2.500 7.500a3.500 3.500 0 115.500-1M6 4l2.500 4" strokeWidth="1.200" /><path d="M10 8h1.500" /></Icon>
            <StatusSelect $w={76}>
              <NativeSelect aria-label="Preflightprofil" defaultValue="[Grundlæggende]…"><option>[Grundlæggende]…</option></NativeSelect>
              <Chevron />
            </StatusSelect>
            <StatusDot />
            <StatusSelect $w={56}>
              <NativeSelect aria-label="Preflight" defaultValue="Ingen fejl"><option>Ingen fejl</option></NativeSelect>
              <Chevron />
            </StatusSelect>
            <HScroll><HThumb /></HScroll>
            <button aria-label="Opdel vindue"><Icon w={24} h={9}><path d="M1.500 1.500h9v6h-9zM6 1.500v6" /></Icon></button>
          </StatusBar>
        </DocumentArea>

        <Dock $w={79}>
          <CollapseStrip $end><Collapse back /></CollapseStrip>
          {dockGroups.map((items) => (
            <React.Fragment key={items[0]}>
              <GripRow><Grip /></GripRow>
              <DockGroup>
                {items.map((name) => (
                  <DockItem key={name} $on={name === "Sider"}>
                    <Icon>{dockIcons[name]}</Icon>{name}
                  </DockItem>
                ))}
              </DockGroup>
            </React.Fragment>
          ))}
        </Dock>
        <Dock $w={111}>
          <CollapseStrip $end><Collapse back /></CollapseStrip>
          <GripRow><Grip /></GripRow>
          <DockGroup>
            <DockItem><Icon>{dockIcons["CC Libraries"]}</Icon>CC Libraries</DockItem>
          </DockGroup>
        </Dock>

        <PagesPanel>
          <PanelTabs>
            <PanelTab $on>
              <Icon w={4} h={7}><path d="M.5 2.500L2 1l1.500 1.500M.5 4.500L2 6l1.500-1.500" strokeWidth=".8" /></Icon>Sider
            </PanelTab>
            <PanelTab>Lag</PanelTab>
            <PanelTab>Lænker</PanelTab>
            <PanelTools>
              <Icon w={8} h={7}><path d="M1 1l2.500 2.500L1 6M4.500 1L7 3.500 4.500 6" stroke="#ccc" /></Icon>
              <Icon w={1} h={7}><path d="M.5 0v7" stroke="#777" /></Icon>
              <MenuIcon />
            </PanelTools>
          </PanelTabs>
          <Masters>
            <MasterRow><MasterName>[Ingen]</MasterName><Thumbs><Thumb /></Thumbs></MasterRow>
            <MasterRow><MasterName>A-Overordnet</MasterName><Thumbs><Thumb /><Thumb /></Thumbs></MasterRow>
          </Masters>
          <Spreads>
            <Spread>
              <SectionMarker><Icon w={7} h={4}><path d="M0 0h7L3.500 3.500z" fill="#c8c8c8" stroke="none" /></Icon></SectionMarker>
              <SpreadPages><SpreadPage $side="right" $current><span>A</span></SpreadPage></SpreadPages>
              <Caption $w={37}><span>1</span></Caption>
            </Spread>
            <Spread>
              <SpreadPages><SpreadPage $side="left"><span>A</span></SpreadPage><SpreadPage $side="right"><span>A</span></SpreadPage></SpreadPages>
              <Caption $w={54}><span>2-3</span></Caption>
            </Spread>
            <Spread>
              <SpreadPages><SpreadPage $side="left"><span>A</span></SpreadPage><SpreadPage $side="right"><span>A</span></SpreadPage></SpreadPages>
              <Caption $w={54} $on><span>4-5</span></Caption>
            </Spread>
          </Spreads>
          <PanelFooter>
            <span>5 sider på 3 opslag</span>
            <button aria-label="Rediger sidestørrelse"><Icon w={13} h={9}><path d="M.5 3.500h4v4h-4zM4.500 7.500h5v-3M4 2l3-1.500L10 4 7 6z" /><path d="M11.500 7.500h1" /></Icon></button>
            <button aria-label="Ny side"><Icon w={9} h={9}><path d="M.5.500h8v8h-8zM4.500 2.500v4M2.500 4.500h4" /></Icon></button>
            <button aria-label="Slet side"><Icon w={9} h={9}><path d="M0 1.500h9M3 .5h3M1.500 2v6.500h6V2M3.500 3v4.500M5.500 3v4.500" /></Icon></button>
          </PanelFooter>
          <ResizeBar><Grip /></ResizeBar>
        </PagesPanel>

        <Callout role="dialog" aria-label="Dokumentopsætning">
          <Shortcut>Ctrl + Alt + P (Windows)<br />Cmd + Option + P (Mac)</Shortcut>
          <DialogTitle>Dokumentopsætning</DialogTitle>
          <DialogBody onSubmit={(e) => e.preventDefault()}>
            <Split>
              <Rows>
                <FormRow>
                  <FormLabel $w={51} htmlFor="intent">Hensigt:</FormLabel>
                  <Sized $w={63}><Picker id="intent" label="Hensigt" value="Udskriv" /></Sized>
                </FormRow>
                <FormRow>
                  <FormLabel $w={51} htmlFor="count">Antal sider:</FormLabel>
                  <PlainField id="count" $active defaultValue="5" />
                </FormRow>
                <FormRow>
                  <FormLabel $w={51} htmlFor="start">Startsidenr.:</FormLabel>
                  <PlainField id="start" defaultValue="1" />
                </FormRow>
              </Rows>
              <Rows $top={17}>
                <CheckLabel><CheckBox type="checkbox" defaultChecked />Modstående sider</CheckLabel>
                <CheckLabel $off><CheckBox type="checkbox" disabled />Primær tekstramme</CheckLabel>
              </Rows>
            </Split>

            <Frame $mt={14}>
              <SizeLegend>
                <FormLabel $w={58} htmlFor="size">Sidestørrelse:</FormLabel>
                <Sized $w={132}><Picker id="size" label="Sidestørrelse" value="A4" /></Sized>
              </SizeLegend>
              <SizeGrid>
                <Rows>
                  <FormRow>
                    <FormLabel $w={55} htmlFor="width">Bredde:</FormLabel>
                    <Sized $w={54}><NumberField id="width" label="Bredde" value="210 mm" /></Sized>
                  </FormRow>
                  <FormRow>
                    <FormLabel $w={55} htmlFor="height">Højde:</FormLabel>
                    <Sized $w={54}><NumberField id="height" label="Højde" value="297 mm" /></Sized>
                  </FormRow>
                </Rows>
                <OrientationRow>
                  Retning:
                  <SmallButton $on type="button" aria-label="Stående">
                    <Icon w={9} h={11}><path d="M.5.500h8v10h-8z" stroke="#aaa" /><circle cx="4.500" cy="3" r="1.200" fill="#ddd" stroke="none" /><path d="M2.500 5h4v5h-4z" fill="#ddd" stroke="none" /></Icon>
                  </SmallButton>
                  <SmallButton type="button" aria-label="Liggende">
                    <Icon w={10} h={10}><path d="M.5.500h9v9h-9z" stroke="#aaa" /><path d="M1.500 5H5" /><path d="M5 2.500h4v5H5z" fill="#bbb" stroke="none" /></Icon>
                  </SmallButton>
                </OrientationRow>
              </SizeGrid>
            </Frame>

            <Frame $mt={13}>
              <TextLegend>Margener</TextLegend>
              <MarginGrid>
                <Rows>
                  <FormRow>
                    <FormLabel $w={51} htmlFor="top">Top:</FormLabel>
                    <Sized $w={54}><NumberField id="top" label="Top" value="12,7 mm" /></Sized>
                  </FormRow>
                  <FormRow>
                    <FormLabel $w={51} htmlFor="bottom">Bund:</FormLabel>
                    <Sized $w={54}><NumberField id="bottom" label="Bund" value="12,7 mm" /></Sized>
                  </FormRow>
                </Rows>
                <LinkCell>
                  <SmallButton $on type="button" aria-label="Ens indstillinger">
                    <Icon w={6} h={10}><rect x="1.500" y=".5" width="3" height="5" rx="1.500" /><rect x="1.500" y="4.500" width="3" height="5" rx="1.500" /></Icon>
                  </SmallButton>
                </LinkCell>
                <Rows>
                  <FormRow>
                    <FormLabel $w={51} htmlFor="inside">Indvendig:</FormLabel>
                    <Sized $w={54}><NumberField id="inside" label="Indvendig" value="12,7 mm" /></Sized>
                  </FormRow>
                  <FormRow>
                    <FormLabel $w={51} htmlFor="outside">Udvendig:</FormLabel>
                    <Sized $w={54}><NumberField id="outside" label="Udvendig" value="12,7 mm" /></Sized>
                  </FormRow>
                </Rows>
              </MarginGrid>
            </Frame>

            <Disclosure type="button">
              <Icon w={5} h={6}><path d="M1 1l2 2-2 2" /></Icon>Beskæring og satslinje
            </Disclosure>

            <AdjustBox>
              <Icon w={11} h={11}><circle cx="5.500" cy="5.500" r="4.800" /><path d="M5.500 5v3.500M5.500 2.800v1.200" /></Icon>
              <AdjustText>Tilpas sideelementer til<br />ændringer i dokumentet</AdjustText>
              <PillButton $w={71} type="button">Juster layout…</PillButton>
            </AdjustBox>

            <DialogFooter>
              <CheckLabel><CheckBox type="checkbox" />Skærmversion</CheckLabel>
              <PillButton $w={60} type="button">Annuller</PillButton>
              <PillButton $w={61} $primary type="submit">OK</PillButton>
            </DialogFooter>
          </DialogBody>
        </Callout>
      </Main>
    </Page>
  );
}
